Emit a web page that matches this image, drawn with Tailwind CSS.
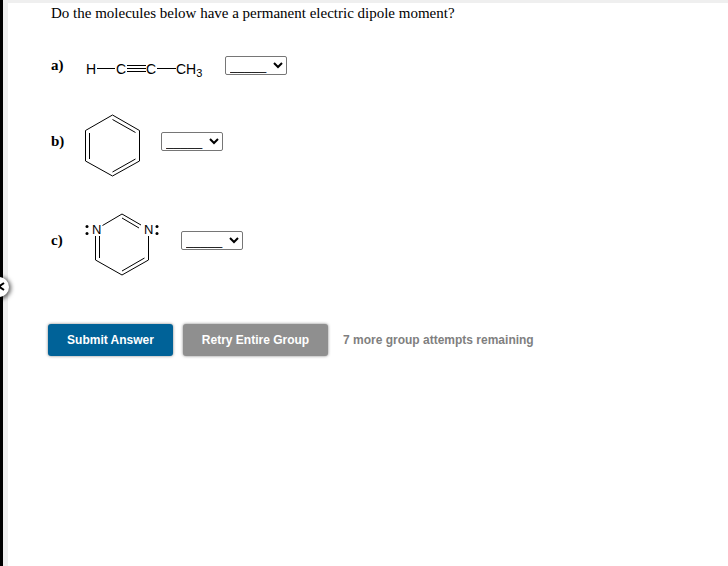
<!DOCTYPE html>
<html lang="en">
<head>
    <meta charset="UTF-8">
    <meta name="viewport" content="width=device-width, initial-scale=1.0">
    <title>Dipole Moments</title>
    <script src="https://cdn.jsdelivr.net/npm/@tailwindcss/browser@4"></script>
</head>
<body class="relative flex min-h-screen overflow-x-hidden bg-white font-['Liberation_Sans',Arial,sans-serif] text-black">
    <!-- side rail -->
    <div class="w-[3px] shrink-0 bg-black"></div>
    <div class="w-[5px] shrink-0 bg-[#efefef]"></div>
    <button type="button" aria-label="Show panel" class="absolute top-[277px] -left-[11px] flex size-5 items-center justify-end rounded-full bg-white shadow-[1px_1px_4px_1px_rgba(0,0,0,0.6)]">
        <svg class="h-3 w-[9px]" viewBox="0 0 9 12" fill="none" stroke="black" stroke-width="2"><path d="M4 2L-1 5.5L4 9"/></svg>
    </button>

    <main class="grow border-t-[3px] border-[#efefef] pl-10">
        <form>
            <div class="pl-[3px] font-['Liberation_Serif','Times_New_Roman',serif]">
                <h1 class="mb-[30px] text-[15px] leading-5">Do the molecules below have a permanent electric dipole moment?</h1>

                <div class="flex flex-col gap-7">
                    <!-- a) propyne -->
                    <div class="flex h-[25px] items-center">
                        <label for="partA" class="w-[34px] pb-0.5 text-[15px] leading-5 font-bold">a)</label>
                        <svg class="mr-5 h-[25px] w-[120px] font-['Liberation_Sans',Arial,sans-serif] text-[14px]" viewBox="0 0 120 25" fill="black">
                            <text x="1" y="21">H</text>
                            <text x="31" y="21">C</text>
                            <text x="61" y="21">C</text>
                            <text x="91" y="21">CH<tspan dy="3" class="text-[11px]">3</tspan></text>
                            <path d="M12 15.5H30M42 12.5H61M42 15.5H61M42 18.5H61M72 15.5H91" stroke="black"/>
                        </svg>
                        <select id="partA" class="h-[19px] w-[62px] rounded-[2px] border border-[#767676] bg-white font-['Liberation_Sans',Arial,sans-serif] text-[13px]">
                            <option>_____</option>
                            <option>yes</option>
                            <option>no</option>
                        </select>
                    </div>

                    <!-- b) benzene -->
                    <div class="flex h-[71px] items-center">
                        <label for="partB" class="w-[34px] pb-0.5 text-[15px] leading-5 font-bold">b)</label>
                        <svg class="mr-5 h-[71px] w-14" viewBox="0 0 56 71" fill="none" stroke="black">
                            <path d="M27.5 9L54.5 24.5V55L27.5 70L0.5 55V24.5Z"/>
                            <path d="M27.5 13.5L50.5 26.5M50.5 53L27.5 66M4.5 27V53"/>
                        </svg>
                        <select id="partB" class="h-[19px] w-[62px] rounded-[2px] border border-[#767676] bg-white font-['Liberation_Sans',Arial,sans-serif] text-[13px]">
                            <option>_____</option>
                            <option>yes</option>
                            <option>no</option>
                        </select>
                    </div>

                    <!-- c) pyrimidine -->
                    <div class="flex h-[71px] items-center">
                        <label for="partC" class="w-[34px] pb-0.5 text-[15px] leading-5 font-bold">c)</label>
                        <svg class="mr-5 h-[71px] w-[76px] font-['Liberation_Sans',Arial,sans-serif] text-[13px]" viewBox="0 0 76 71" fill="black">
                            <text x="7" y="29">N</text>
                            <text x="59" y="29">N</text>
                            <circle cx="2" cy="21.5" r="1.5"/>
                            <circle cx="2" cy="28.5" r="1.5"/>
                            <circle cx="72" cy="21.5" r="1.5"/>
                            <circle cx="72" cy="28.5" r="1.5"/>
                            <path d="M17.5 20.5L37 9L56 20M37 13L54 23M10.5 31V55L37 70L63.5 55V31M14.5 31V53M59.5 53L37 66" fill="none" stroke="black"/>
                        </svg>
                        <select id="partC" class="h-[19px] w-[62px] rounded-[2px] border border-[#767676] bg-white font-['Liberation_Sans',Arial,sans-serif] text-[13px]">
                            <option>_____</option>
                            <option>yes</option>
                            <option>no</option>
                        </select>
                    </div>
                </div>
            </div>

            <div class="mt-12 flex items-center text-[12px] leading-4 font-bold">
                <button type="submit" class="mr-2.5 h-8 w-[125px] rounded-[3px] bg-[#006298] text-white shadow-[0_0_3px_rgba(0,0,0,0.5)]">Submit Answer</button>
                <button type="button" class="mr-[15px] h-8 w-[145px] rounded-[3px] bg-[#8f8f8f] text-white shadow-[0_0_3px_rgba(0,0,0,0.5)]">Retry Entire Group</button>
                <p class="text-[#7f7f7f]">7 more group attempts remaining</p>
            </div>
        </form>
    </main>
</body>
</html>
